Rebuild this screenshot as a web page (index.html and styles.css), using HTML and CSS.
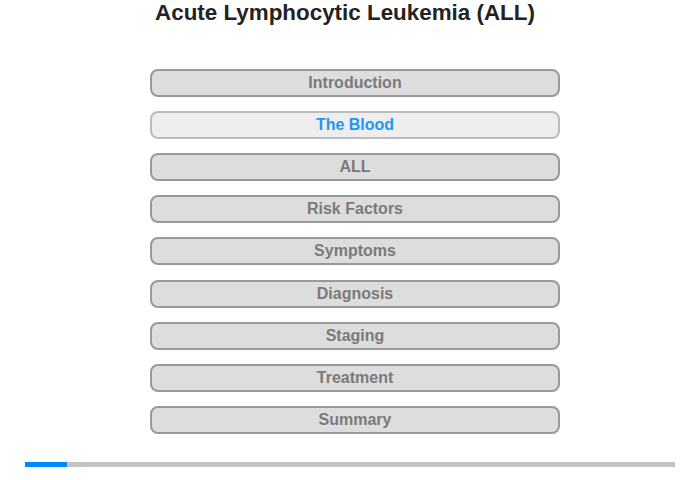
FILE: index.html
```html
<!DOCTYPE html>
<html>
<head>
<meta charset="utf-8">
<link rel="stylesheet" href="styles.css">
</head>
<body>
<div class="page">
  <h1 class="title">Acute Lymphocytic Leukemia (ALL)</h1>
  <nav class="menu">
    <div class="item">Introduction</div>
    <div class="item active">The Blood</div>
    <div class="item">ALL</div>
    <div class="item">Risk Factors</div>
    <div class="item">Symptoms</div>
    <div class="item">Diagnosis</div>
    <div class="item">Staging</div>
    <div class="item">Treatment</div>
    <div class="item">Summary</div>
  </nav>
  <div class="progress"><div class="progress-fill"></div></div>
</div>
</body>
</html>
```
FILE: styles.css
```css
html, body {
  margin: 0;
  padding: 0;
  background: #fff;
}
.page {
  width: 700px;
  height: 480px;
  font-family: "Liberation Sans", Arial, sans-serif;
  display: flex;
  flex-direction: column;
}
.title {
  margin: 0;
  padding: 0 10px 0 0;
  font-size: 22.4px;
  line-height: 26px;
  font-weight: bold;
  color: #222;
  text-align: center;
}
.menu {
  margin-top: 43px;
  padding-left: 150px;
  display: flex;
  flex-direction: column;
  gap: 14px;
}
.item {
  box-sizing: border-box;
  width: 410px;
  height: 28px;
  border: 2px solid #999;
  border-radius: 8px;
  background: #ddd;
  color: #7a7a7a;
  font-size: 16px;
  font-weight: bold;
  line-height: 24px;
  text-align: center;
}
.item.active {
  background: #eee;
  border-color: #bbb;
  color: #2196f3;
}
.menu .item:nth-child(6) {
  margin-top: 1px;
}
.progress {
  margin: 28px 0 0 25px;
  width: 650px;
  height: 5px;
  background: #c4c4c4;
}
.progress-fill {
  width: 42px;
  height: 5px;
  background: #0088ff;
}
```
